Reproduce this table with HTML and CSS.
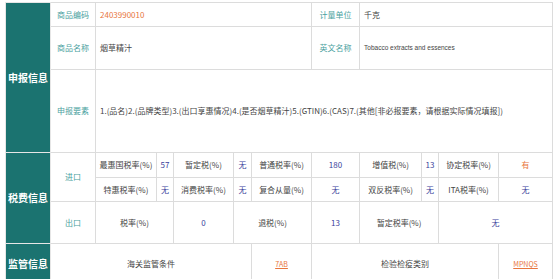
FILE: index.html
```html
<!DOCTYPE html>
<html lang="zh">
<head>
<meta charset="utf-8">
<link rel="stylesheet" href="styles.css">
</head>
<body>
<table class="info">
  <colgroup>
    <col class="w45"><col class="w45"><col class="w61"><col class="w17"><col class="w60"><col class="w18">
    <col class="w60"><col class="w48"><col class="w62"><col class="w17"><col class="w60"><col class="w54">
  </colgroup>
  <tr class="r1">
    <td class="sec" rowspan="3">申报信息</td>
    <td class="lbl">商品编码</td>
    <td class="val code" colspan="5">2403990010</td>
    <td class="lbl">计量单位</td>
    <td class="val" colspan="4">千克</td>
  </tr>
  <tr class="r2">
    <td class="lbl">商品名称</td>
    <td class="val" colspan="5">烟草精汁</td>
    <td class="lbl">英文名称</td>
    <td class="val en" colspan="4">Tobacco extracts and essences</td>
  </tr>
  <tr class="r3">
    <td class="lbl">申报要素</td>
    <td class="val" colspan="10">1.(品名)2.(品牌类型)3.(出口享惠情况)4.(是否烟草精汁)5.(GTIN)6.(CAS)7.(其他[非必报要素，请根据实际情况填报])</td>
  </tr>
  <tr class="r4">
    <td class="sec" rowspan="3">税费信息</td>
    <td class="lbl" rowspan="2">进口</td>
    <td class="c">最惠国税率(%)</td>
    <td class="c num">57</td>
    <td class="c">暂定税(%)</td>
    <td class="c num">无</td>
    <td class="c">普通税率(%)</td>
    <td class="c num">180</td>
    <td class="c">增值税(%)</td>
    <td class="c num">13</td>
    <td class="c">协定税率(%)</td>
    <td class="c org">有</td>
  </tr>
  <tr class="r5">
    <td class="c">特惠税率(%)</td>
    <td class="c num">无</td>
    <td class="c">消费税率(%)</td>
    <td class="c num">无</td>
    <td class="c">复合从量(%)</td>
    <td class="c num">无</td>
    <td class="c">双反税率(%)</td>
    <td class="c num">无</td>
    <td class="c">ITA税率(%)</td>
    <td class="c num">无</td>
  </tr>
  <tr class="r6">
    <td class="lbl">出口</td>
    <td class="c" colspan="2">税率(%)</td>
    <td class="c num">0</td>
    <td class="c" colspan="2">退税(%)</td>
    <td class="c num">13</td>
    <td class="c" colspan="2">暂定税率(%)</td>
    <td class="c num" colspan="2">无</td>
  </tr>
  <tr class="r7">
    <td class="sec">监管信息</td>
    <td class="c" colspan="5">海关监管条件</td>
    <td class="c"><a class="link">7AB</a></td>
    <td class="c" colspan="4">检验检疫类别</td>
    <td class="c"><a class="link">MPNQS</a></td>
  </tr>
</table>
</body>
</html>
```

FILE: styles.css
```css
html, body {
  margin: 0;
  padding: 0;
  background: #fff;
}
body {
  padding: 2px 0 0 5px;
  font-family: "Noto Sans CJK SC", "Liberation Sans", sans-serif;
  font-size: 8px;
  color: #444;
}
.info {
  border-collapse: collapse;
  table-layout: fixed;
  width: 547px;
}
.w45 { width: 45px; }
.w61 { width: 61px; }
.w17 { width: 17px; }
.w60 { width: 60px; }
.w18 { width: 18px; }
.w48 { width: 48px; }
.w62 { width: 62px; }
.w54 { width: 54px; }
.info td {
  border: 1px solid #dcdcdc;
  padding: 0;
  line-height: 12px;
  white-space: nowrap;
  overflow: hidden;
}
.r1 td { height: 23px; }
.r2 td { height: 42px; }
.r3 td { height: 82px; }
.r4 td { height: 24px; }
.r5 td { height: 23px; }
.r6 td { height: 41px; }
.r7 td { height: 40px; }
.info td.sec {
  background: #1b7370;
  color: #fff;
  font-weight: bold;
  font-size: 10px;
  text-align: center;
  border-color: #e6e6e6;
}
.lbl {
  color: #4a9fa0;
  text-align: center;
}
.val {
  padding-left: 4px !important;
  text-align: left;
  color: #444;
}
.code { color: #e8763e; }
.en { font-family: "Liberation Sans", sans-serif; font-size: 6.5px; }
.c { text-align: center; }
.num { color: #3b3f9c; }
.org { color: #e8763e; }
.link {
  color: #e8763e;
  text-decoration: underline;
  font-size: 7px;
}
```
